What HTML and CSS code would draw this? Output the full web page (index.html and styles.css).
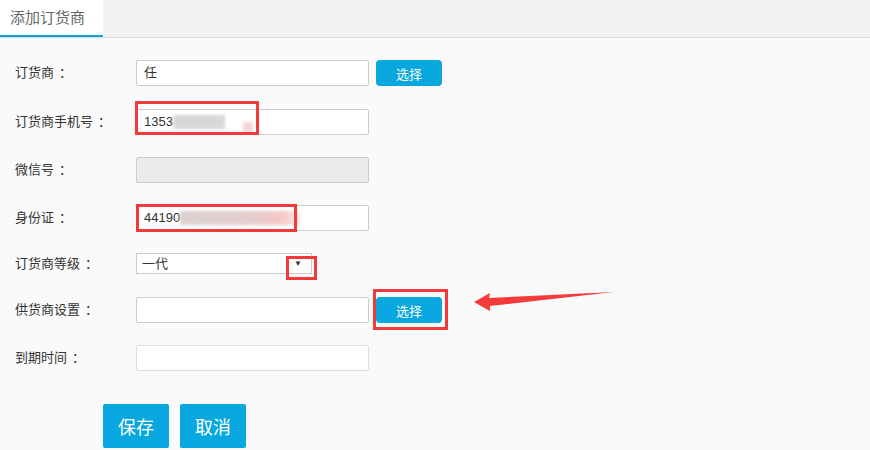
FILE: index.html
```html
<!DOCTYPE html>
<html lang="zh-CN">
<head>
    <meta charset="UTF-8">
    <title>添加订货商</title>
    <link rel="stylesheet" href="styles.css">
</head>
<body>
    <div class="tabs">
        <div class="tab active">添加订货商</div>
    </div>

    <div class="content">
        <form class="form">
            <div class="row">
                <label>订货商<span class="colon">：</span></label>
                <div class="input">任</div>
                <button type="button" class="btn-small">选择</button>
            </div>
            <div class="row">
                <label>订货商手机号<span class="colon">：</span></label>
                <div class="input">1353<span class="mosaic gray"></span><span class="mosaic pink short"></span></div>
                <span class="mark mark-phone"></span>
            </div>
            <div class="row">
                <label>微信号<span class="colon">：</span></label>
                <div class="input disabled"></div>
            </div>
            <div class="row">
                <label>身份证<span class="colon">：</span></label>
                <div class="input">44190<span class="mosaic pinkgray"></span></div>
                <span class="mark mark-id"></span>
            </div>
            <div class="row row-select">
                <label>订货商等级<span class="colon">：</span></label>
                <div class="select">一代<span class="caret">▼</span></div>
                <span class="mark mark-caret"></span>
            </div>
            <div class="row">
                <label>供货商设置<span class="colon">：</span></label>
                <div class="input"></div>
                <button type="button" class="btn-small">选择</button>
                <span class="mark mark-btn"></span>
            </div>
            <div class="row">
                <label>到期时间<span class="colon">：</span></label>
                <div class="input light"></div>
            </div>

            <div class="actions">
                <button type="button" class="btn-big">保存</button>
                <button type="button" class="btn-big">取消</button>
            </div>
        </form>

        <!-- annotation arrow -->
        <svg class="arrow" width="150" height="24" viewBox="0 0 150 24">
            <polygon points="0,13 16,4 15,9 140,3 16,17 16,22" fill="#f43a3a"/>
        </svg>
    </div>
</body>
</html>
```

FILE: styles.css
```css
body {
    margin: 0;
    font-family: "Liberation Sans", "Noto Sans CJK SC", sans-serif;
    background: #fafafa;
    color: #333;
    font-size: 13px;
}

/* Tab bar */
.tabs {
    display: flex;
    height: 37px;
    background: #f2f2f2;
    border-bottom: 1px solid #ddd;
}

.tab {
    width: 103px;
    box-sizing: border-box;
    padding-left: 10px;
    line-height: 35px;
    font-size: 15px;
    color: #666;
}

.tab.active {
    background: #fff;
    border-bottom: 2px solid #09a3df;
}

/* Form */
.content {
    position: relative;
}

.form {
    padding: 22px 0 0 15px;
}

.row {
    position: relative;
    display: flex;
    align-items: center;
    height: 26px;
    margin-bottom: 22px;
}

.row:first-child {
    margin-bottom: 23px;
}

.row-select {
    height: 21px;
    margin-bottom: 23px;
}

.row label {
    width: 121px;
    margin-top: -3px;
}

.colon {
    padding-left: 5px;
}

.input {
    width: 233px;
    height: 26px;
    box-sizing: border-box;
    border: 1px solid #ccc;
    border-radius: 2px;
    background: #fff;
    padding-left: 7px;
    line-height: 24px;
    display: flex;
    align-items: center;
}

.input.disabled {
    background: #ebebeb;
}

.input.light {
    border-color: #ddd;
}

.mosaic {
    display: inline-block;
    height: 14px;
    filter: blur(1.5px);
}

.mosaic.gray {
    width: 52px;
    background: #d8d8d8;
}

.mosaic.pink {
    background: #f6d4d4;
}

.mosaic.short {
    width: 10px;
    margin-left: 18px;
    height: 10px;
    margin-top: 10px;
}

.mosaic.pinkgray {
    width: 120px;
    background: linear-gradient(to right, #dcd2d2, #e4cccc 60%, #f5c8c8 85%, #f8e8e8);
}

.select {
    width: 176px;
    height: 21px;
    box-sizing: border-box;
    border: 1px solid #ccc;
    background: #fff;
    padding-left: 5px;
    line-height: 19px;
    font-size: 13px;
    display: flex;
    justify-content: space-between;
}

.caret {
    font-size: 8px;
    color: #333;
    padding-right: 9px;
}

.btn-small {
    margin-left: 7px;
    width: 66px;
    height: 26px;
    border: none;
    border-radius: 4px;
    background: #09a7e0;
    color: #fff;
    font-size: 13px;
    font-family: inherit;
    padding: 0;
}

.actions {
    display: flex;
    gap: 11px;
    margin: 33px 0 0 88px;
}

.btn-big {
    width: 66px;
    height: 44px;
    border: none;
    border-radius: 2px;
    background: #09a7e0;
    color: #fff;
    font-size: 18px;
    font-family: inherit;
    padding: 0;
}

/* Red annotation marks */
.mark {
    position: absolute;
    border: 3px solid #f33a3a;
    box-sizing: border-box;
}

.mark-phone {
    left: 120px;
    top: -8px;
    width: 124px;
    height: 34px;
}

.mark-id {
    left: 121px;
    top: -1px;
    width: 161px;
    height: 28px;
}

.mark-caret {
    left: 271px;
    top: 3px;
    width: 31px;
    height: 24px;
}

.mark-btn {
    left: 358px;
    top: -8px;
    width: 75px;
    height: 41px;
}

.arrow {
    position: absolute;
    left: 474px;
    top: 251px;
}
```
